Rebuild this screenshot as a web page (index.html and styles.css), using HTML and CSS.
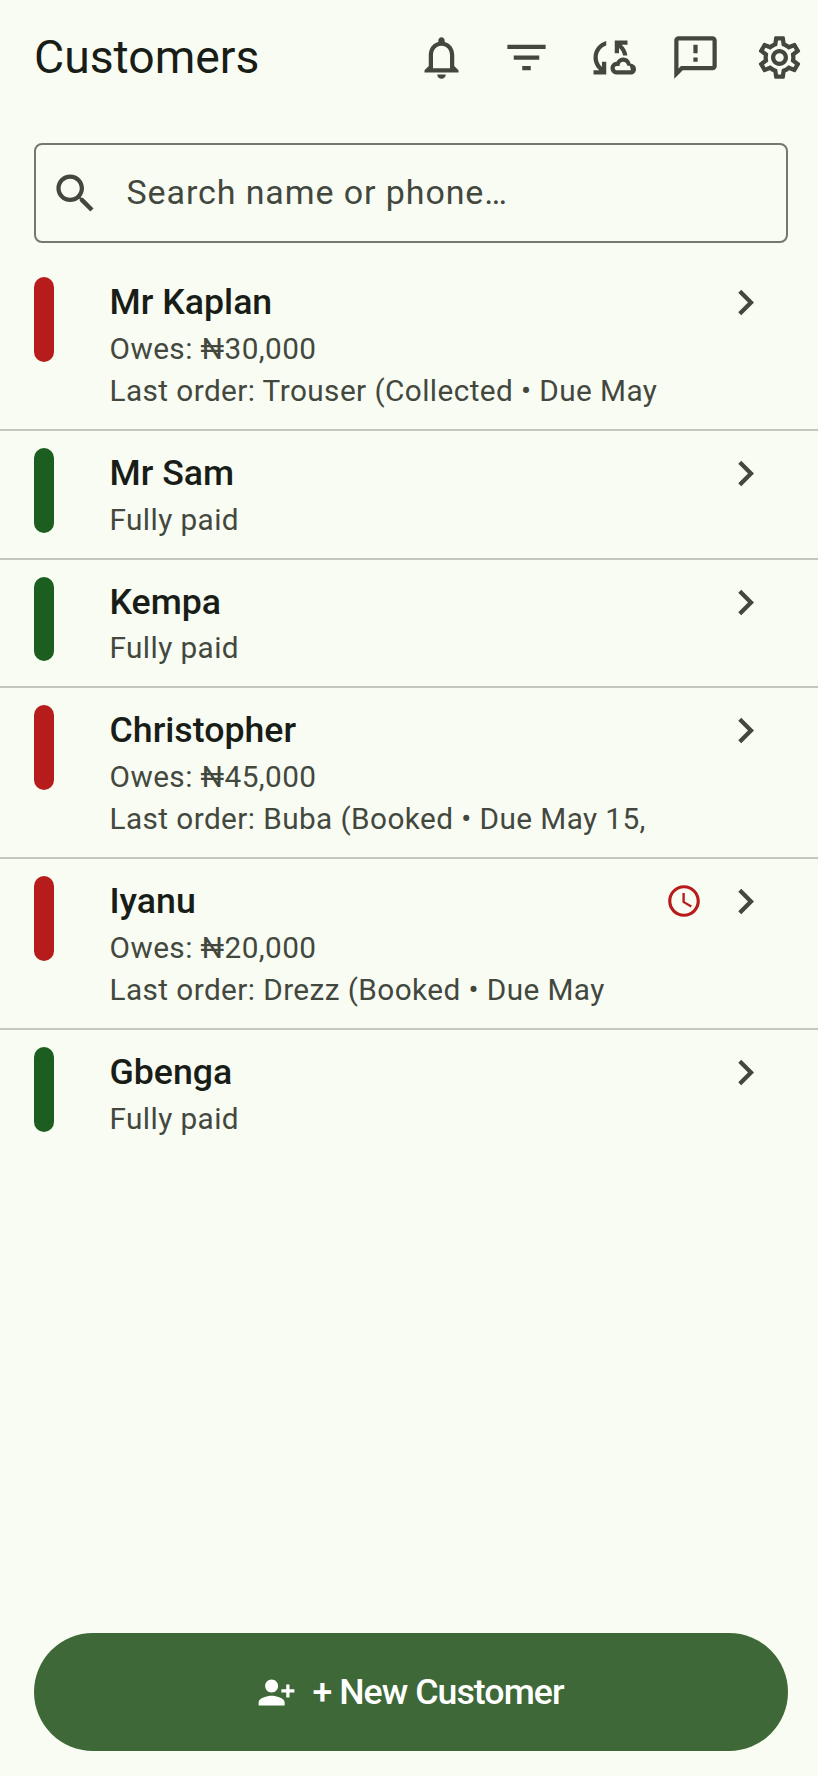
FILE: index.html
```html
<!DOCTYPE html>
<html lang="en">
<head>
<meta charset="utf-8">
<title>Customers</title>
<link rel="stylesheet" href="styles.css">
</head>
<body>
<svg class="sprite" width="0" height="0" aria-hidden="true">
  <symbol id="i-chevron" viewBox="0 0 24 24"><path d="M10 6L8.59 7.41 13.17 12l-4.58 4.59L10 18l6-6z"/></symbol>
</svg>
<div class="page">
  <header class="topbar">
    <h1 class="title">Customers</h1>
    <div class="actions">
      <svg class="icon" viewBox="0 0 24 24"><path d="M12 22c1.1 0 2-.9 2-2h-4c0 1.1.89 2 2 2zm6-6v-5c0-3.07-1.64-5.64-4.5-6.32V4c0-.83-.67-1.5-1.5-1.5s-1.5.67-1.5 1.5v.68C7.63 5.36 6 7.92 6 11v5l-2 2v1h16v-1l-2-2zm-2 1H8v-6c0-2.48 1.51-4.5 4-4.5s4 2.02 4 4.5v6z"/></svg>
      <svg class="icon" viewBox="0 0 24 24"><path d="M10 18h4v-2h-4v2zM3 6v2h18V6H3zm3 7h12v-2H6v2z"/></svg>
      <svg class="icon" viewBox="0 0 24 24"><path d="M21.5,14.98c-0.02,0-0.03,0-0.05,0.01C21.2,13.3,19.76,12,18,12c-1.4,0-2.6,0.83-3.16,2.02C13.26,14.1,12,15.4,12,17c0,1.66,1.34,3,3,3l6.5-0.02c1.38,0,2.5-1.12,2.5-2.5S22.88,14.98,21.5,14.98z M21.51,18L21.51,18L15,18.02c-0.55,0-1-0.45-1-1s0.45-1,1-1h1.25v-0.25c0-0.97,0.78-1.75,1.75-1.75c0.75,0,1.41,0.48,1.65,1.19l0.25,0.73l0.76-0.03c0.01,0,0.03,0,0.04,0c0.28,0,0.5,0.22,0.5,0.5S21.79,18,21.51,18z M10,4.26v2.09C7.67,7.18,6,9.39,6,12c0,1.77,0.78,3.34,2,4.44V14h2v6H4v-2h2.73C5.06,16.54,4,14.4,4,12C4,8.27,6.55,5.15,10,4.26z M20,6h-2.73c1.43,1.26,2.41,3.01,2.66,5l-2.02,0C17.68,9.64,16.98,8.45,16,7.56V10h-2V4h6V6z"/></svg>
      <svg class="icon" viewBox="0 0 24 24"><path d="M20 2H4c-1.1 0-1.99.9-1.99 2L2 22l4-4h14c1.1 0 2-.9 2-2V4c0-1.1-.9-2-2-2zm0 14H5.17L4 17.17V4h16v12zm-9-4h2v2h-2zm0-6h2v4h-2z"/></svg>
      <svg class="icon" viewBox="0 0 24 24"><path d="M19.43 12.98c.04-.32.07-.64.07-.98 0-.34-.03-.66-.07-.98l2.11-1.65c.19-.15.24-.42.12-.64l-2-3.46c-.09-.16-.26-.25-.44-.25-.06 0-.12.01-.17.03l-2.49 1c-.52-.4-1.08-.73-1.69-.98l-.38-2.65C14.46 2.18 14.25 2 14 2h-4c-.25 0-.46.18-.49.42l-.38 2.65c-.61.25-1.17.59-1.69.98l-2.49-1c-.06-.02-.12-.03-.18-.03-.17 0-.34.09-.43.25l-2 3.46c-.13.22-.07.49.12.64l2.11 1.65c-.04.32-.07.65-.07.98 0 .33.03.66.07.98l-2.11 1.65c-.19.15-.24.42-.12.64l2 3.46c.09.16.26.25.44.25.06 0 .12-.01.17-.03l2.49-1c.52.4 1.08.73 1.69.98l.38 2.65c.03.24.24.42.49.42h4c.25 0 .46-.18.49-.42l.38-2.65c.61-.25 1.17-.59 1.69-.98l2.49 1c.06.02.12.03.18.03.17 0 .34-.09.43-.25l2-3.46c.12-.22.07-.49-.12-.64l-2.11-1.65zm-1.98-1.71c.04.31.05.52.05.73 0 .21-.02.43-.05.73l-.14 1.13.89.7 1.08.84-.7 1.21-1.27-.51-1.04-.42-.9.68c-.43.32-.84.56-1.25.73l-1.06.43-.16 1.13-.2 1.35h-1.4l-.19-1.35-.16-1.13-1.06-.43c-.43-.18-.83-.41-1.23-.71l-.91-.7-1.06.43-1.27.51-.7-1.21 1.08-.84.89-.7-.14-1.13c-.03-.31-.05-.54-.05-.74s.02-.43.05-.73l.14-1.13-.89-.7-1.08-.84.7-1.21 1.27.51 1.04.42.9-.68c.43-.32.84-.56 1.25-.73l1.06-.43.16-1.13.2-1.35h1.39l.19 1.35.16 1.13 1.06.43c.43.18.83.41 1.23.71l.91.7 1.06-.43 1.27-.51.7 1.21-1.07.85-.89.7.14 1.13zM12 8c-2.21 0-4 1.79-4 4s1.79 4 4 4 4-1.79 4-4-1.79-4-4-4zm0 6c-1.1 0-2-.9-2-2s.9-2 2-2 2 .9 2 2-.9 2-2 2z"/></svg>
    </div>
  </header>

  <div class="search">
    <svg class="icon" viewBox="0 0 24 24"><path d="M15.5 14h-.79l-.28-.27C15.41 12.59 16 11.11 16 9.5 16 5.91 13.09 3 9.5 3S3 5.91 3 9.5 5.91 16 9.5 16c1.61 0 3.09-.59 4.23-1.57l.27.28v.79l5 4.99L20.49 19l-4.99-5zm-6 0C7.01 14 5 11.99 5 9.5S7.01 5 9.5 5 14 7.01 14 9.5 11.99 14 9.5 14z"/></svg>
    <span class="placeholder">Search name or phone…</span>
  </div>

  <ul class="list">
    <li class="row">
      <span class="bar bar-red"></span>
      <div class="info">
        <div class="name">Mr Kaplan</div>
        <div class="sub">Owes: ₦30,000</div>
        <div class="sub">Last order: Trouser (Collected • Due May</div>
      </div>
      <svg class="icon"><use href="#i-chevron"/></svg>
    </li>
    <li class="row">
      <span class="bar bar-green"></span>
      <div class="info">
        <div class="name">Mr Sam</div>
        <div class="sub">Fully paid</div>
      </div>
      <svg class="icon"><use href="#i-chevron"/></svg>
    </li>
    <li class="row">
      <span class="bar bar-green"></span>
      <div class="info">
        <div class="name">Kempa</div>
        <div class="sub">Fully paid</div>
      </div>
      <svg class="icon"><use href="#i-chevron"/></svg>
    </li>
    <li class="row">
      <span class="bar bar-red"></span>
      <div class="info">
        <div class="name">Christopher</div>
        <div class="sub">Owes: ₦45,000</div>
        <div class="sub">Last order: Buba (Booked • Due May 15,</div>
      </div>
      <svg class="icon"><use href="#i-chevron"/></svg>
    </li>
    <li class="row">
      <span class="bar bar-red"></span>
      <div class="info">
        <div class="name">Iyanu</div>
        <div class="sub">Owes: ₦20,000</div>
        <div class="sub">Last order: Drezz (Booked • Due May</div>
      </div>
      <svg class="clock" viewBox="0 0 24 24"><path d="M11.99 2C6.47 2 2 6.48 2 12s4.47 10 9.99 10C17.52 22 22 17.52 22 12S17.52 2 11.99 2zM12 20c-4.42 0-8-3.58-8-8s3.58-8 8-8 8 3.58 8 8-3.58 8-8 8zm.5-13H11v6l5.25 3.15.75-1.23-4.5-2.67z"/></svg>
      <svg class="icon"><use href="#i-chevron"/></svg>
    </li>
    <li class="row">
      <span class="bar bar-green"></span>
      <div class="info">
        <div class="name">Gbenga</div>
        <div class="sub">Fully paid</div>
      </div>
      <svg class="icon"><use href="#i-chevron"/></svg>
    </li>
  </ul>

  <button class="cta" type="button">
    <svg class="cta-icon" viewBox="0 0 24 24"><path transform="matrix(-1 0 0 1 24 0)" d="M15 12c2.21 0 4-1.79 4-4s-1.79-4-4-4-4 1.79-4 4 1.79 4 4 4zm-9-2V7H4v3H1v2h3v3h2v-3h3v-2H6zm9 4c-2.67 0-8 1.34-8 4v2h16v-2c0-2.66-5.33-4-8-4z"/></svg>
    <span>+ New Customer</span>
  </button>
</div>
</body>
</html>
```

FILE: styles.css
```css
* { box-sizing: border-box; }

html, body {
  margin: 0;
  padding: 0;
  height: 100%;
}

body {
  background: #f9fcf2;
  color: #191d17;
  font-family: Roboto, "Noto Sans", sans-serif;
  overflow: hidden;
}

.sprite { position: absolute; }

.page {
  display: flex;
  flex-direction: column;
  height: 1776px;
}

.icon {
  width: 51px;
  height: 51px;
  flex: none;
  fill: #43483f;
}

.topbar {
  display: flex;
  align-items: center;
  justify-content: space-between;
  padding: 32px 13px 0 34px;
}

.title {
  margin: 0;
  font-size: 46.3px;
  font-weight: 400;
  line-height: 51px;
}

.actions {
  display: flex;
  gap: 33.5px;
}

.search {
  display: flex;
  align-items: center;
  gap: 26px;
  height: 100px;
  margin: 60px 30.5px 17px 33.5px;
  padding: 0 14px;
  border: 2px solid #74796e;
  border-radius: 8px;
}

.placeholder {
  padding-bottom: 3px;
  font-size: 34px;
  letter-spacing: .9px;
  color: #43483f;
}

.list {
  flex: 1;
  margin: 0;
  padding: 0;
  list-style: none;
}

.row {
  display: flex;
  align-items: flex-start;
  padding: 17px 47px 16.5px 33.5px;
  border-bottom: 2px solid #c3c8bc;
}

.row:last-child { border-bottom: 0; }

.bar {
  width: 20.5px;
  height: 84.5px;
  flex: none;
  border-radius: 11px;
  margin-right: 55.5px;
}

.bar-red { background: #b71c1c; }
.bar-green { background: #1b5e20; }

.info {
  flex: 1;
  min-width: 0;
}

.name {
  font-size: 35.7px;
  font-weight: 500;
  line-height: 50px;
  margin-bottom: .5px;
}

.sub {
  font-size: 29.75px;
  line-height: 42.5px;
  letter-spacing: .42px;
  color: #43483f;
  white-space: nowrap;
}

.clock {
  width: 38px;
  height: 38px;
  flex: none;
  margin: 6px 17px 0 0;
  fill: #b71c1c;
}

.cta {
  display: flex;
  align-items: center;
  justify-content: center;
  gap: 16px;
  height: 118px;
  margin: 0 30.5px 25px 33.5px;
  border: 0;
  border-radius: 59px;
  background: #3e6837;
  color: #fff;
  font-family: inherit;
  font-size: 35.7px;
  font-weight: 500;
  letter-spacing: -.95px;
}

.cta-icon {
  width: 39px;
  height: 39px;
  fill: #fff;
}
```
